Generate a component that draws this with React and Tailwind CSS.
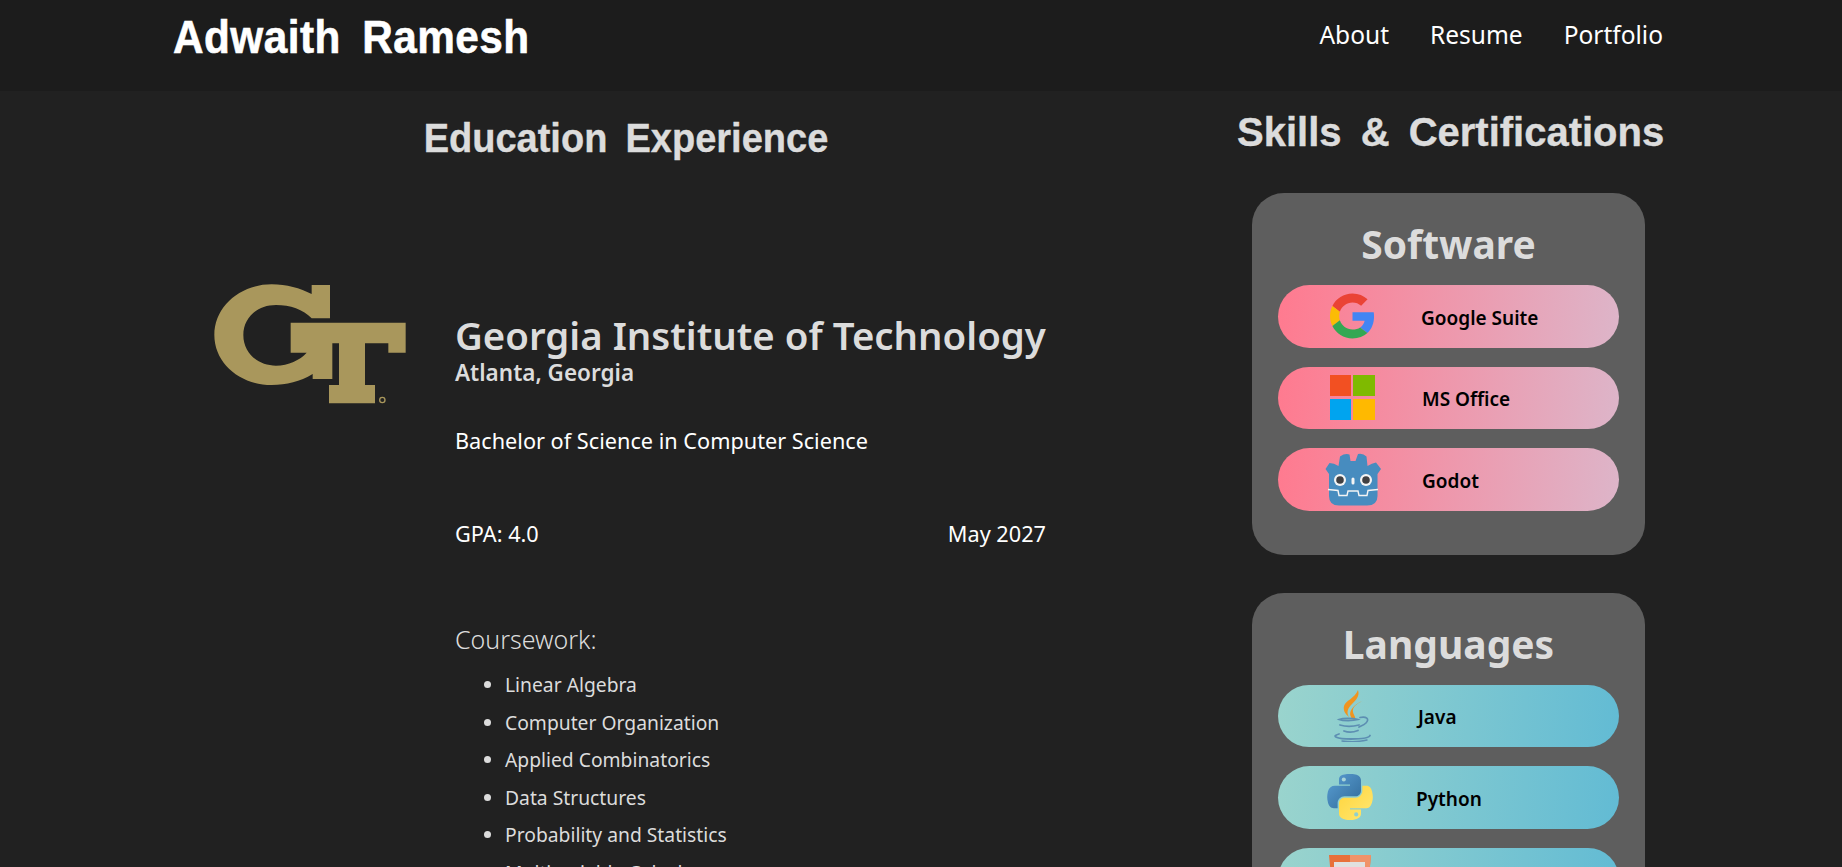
import React from 'react';

const body = "font-['Noto_Sans',sans-serif]";
const display = "font-['Liberation_Sans',sans-serif] font-bold";

const GoogleIcon = () => (
  <svg viewBox="0 0 48 48" className="w-[45px] h-[46px]">
    <path fill="#EA4335" d="M24 9.5c3.54 0 6.71 1.22 9.21 3.6l6.85-6.85C35.9 2.38 30.47 0 24 0 14.62 0 6.51 5.38 2.56 13.22l7.98 6.19C12.43 13.72 17.74 9.5 24 9.5z" />
    <path fill="#4285F4" d="M46.98 24.55c0-1.57-.15-3.09-.38-4.55H24v9.02h12.94c-.58 2.96-2.26 5.48-4.78 7.18l7.73 6c4.51-4.18 7.09-10.36 7.09-17.65z" />
    <path fill="#FBBC05" d="M10.53 28.59c-.48-1.45-.76-2.99-.76-4.59s.27-3.14.76-4.59l-7.98-6.19C.92 16.46 0 20.12 0 24c0 3.88.92 7.54 2.56 10.78l7.97-6.19z" />
    <path fill="#34A853" d="M24 48c6.48 0 11.93-2.13 15.89-5.81l-7.73-6c-2.15 1.45-4.92 2.3-8.16 2.3-6.26 0-11.57-4.22-13.47-9.91l-7.98 6.19C6.51 42.62 14.62 48 24 48z" />
  </svg>
);

const OfficeIcon = () => (
  <svg viewBox="0 0 45 45" className="w-[45px] h-[45px]">
    <rect x="0" y="0" width="21" height="21" fill="#f25022" />
    <rect x="23" y="0" width="22" height="21" fill="#7fba00" />
    <rect x="0" y="24" width="21" height="21" fill="#00a4ef" />
    <rect x="23" y="24" width="22" height="21" fill="#ffb900" />
  </svg>
);

const GodotIcon = () => (
  <svg viewBox="0 0 56 53" className="w-[56px] h-[53px]">
    <path fill="#478cbf" d="M0.5 16 L4.5 10 Q9 10 13.5 13 L15 3.5 Q20 0 24.5 1.5 L25.5 8 H30.5 L33 1 Q38 0 41.5 3.5 L42.5 13 Q47 10 51 9.5 L56 16 L52.5 21 V43 Q52.5 52.5 42 52.5 H14 Q4 52.5 4 43 V21 Z" />
    <circle cx="15" cy="27" r="6" fill="#f4f4f4" />
    <circle cx="15" cy="27" r="3.8" fill="#414042" />
    <circle cx="41" cy="27" r="6" fill="#f4f4f4" />
    <circle cx="41" cy="27" r="3.8" fill="#414042" />
    <rect x="26.5" y="24.5" width="3" height="7" rx="1.5" fill="#f4f4f4" />
    <path fill="none" stroke="#f4f4f4" strokeWidth="1.4" d="M3 36.5 L13 37.5 L14 42.5 H22 L23 38 H33 L34 42.5 H42 L43 37.5 L53 36.5" />
  </svg>
);

const JavaIcon = () => (
  <svg viewBox="0 0 38 52" className="w-[38px] h-[52px]">
    <path fill="#f0941f" d="M25 0 C27 6 23 10 19 14 C15 18 13 22 16 27 C12 24 10 20 11 16 C12 11 22 8 25 0 Z" />
    <path fill="#f0941f" d="M29 11 C24 14 19 17 20 22 C20.500 25 23 27 22 29 C21 32 19 29 18 27 C15 22 20 15 29 11 Z" />
    <g fill="none" stroke="#5d8fb2" strokeLinecap="round">
      <path strokeWidth="1.600" d="M6 29.500 C10 28 20 28 25 29.500 C20 31 10 31 6 29.500 Z" />
      <path strokeWidth="1.700" d="M27 27.500 C33 26 37 29 33 33 C31 35 28 36 26 37" />
      <path strokeWidth="1.800" d="M7 35 C12 36.500 20 36.500 26 35" />
      <path strokeWidth="1.800" d="M11 41 C15 42.500 20 42.500 25 40.500" />
      <path strokeWidth="1.800" d="M6 44 C-2 46 3 49 18 49 C28 49 36 48 37 45.500" />
      <path strokeWidth="1.400" d="M9 51 C17 52 28 51.500 34 50" />
    </g>
  </svg>
);

const PythonIcon = () => (
  <svg viewBox="0 0 111 112" className="w-[46px] h-[46px]">
    <defs>
      <linearGradient id="pyBlue" x1="0" y1="0" x2="1" y2="1">
        <stop offset="0" stopColor="#5a9fd4" />
        <stop offset="1" stopColor="#306998" />
      </linearGradient>
      <linearGradient id="pyYellow" x1="0" y1="0" x2="1" y2="1">
        <stop offset="0" stopColor="#ffd43b" />
        <stop offset="1" stopColor="#ffe873" />
      </linearGradient>
    </defs>
    <path fill="url(#pyBlue)" d="M54.9 0 C50.3 0 46 .4 42.1 1.100 C30.800 3.100 28.700 7.300 28.700 15 V25.300 H55.500 V28.700 H18.600 C10.800 28.700 4 33.300 1.900 42.300 C-.6 52.500 -.7 58.800 1.900 69.500 C3.800 77.400 8.300 83.100 16.100 83.100 H25.400 V70.800 C25.400 62 33 54.200 42.100 54.200 H68.900 C76.300 54.200 82.300 48 82.300 40.600 V15 C82.300 7.800 76.200 2.300 68.900 1.100 C64.300 .3 59.500 0 54.900 0 Z" />
    <path fill="url(#pyYellow)" d="M85.600 28.700 V40.600 C85.600 49.800 77.800 57.600 68.900 57.600 H42.100 C34.800 57.600 28.700 63.800 28.700 71.200 V96.800 C28.700 104 35 108.300 42.100 110.400 C50.600 112.900 58.700 113.300 68.900 110.400 C75.600 108.400 82.300 104.500 82.300 96.800 V86.500 H55.500 V83.100 H95.700 C103.500 83.100 106.400 77.700 109.100 69.500 C111.900 61.100 111.800 53 109.100 42.300 C107.200 34.500 103.500 28.700 95.700 28.700 Z" />
    <circle cx="40.400" cy="13.300" r="5" fill="#a8d4d8" />
    <circle cx="70.600" cy="98.400" r="5" fill="#8fcfd0" />
  </svg>
);

const HtmlIcon = () => (
  <svg viewBox="0 0 42 48" className="w-[42px] h-[48px]">
    <path fill="#e8703a" d="M0 0 H42 L38 43 L21 48 L4 43 Z" />
    <path fill="#f0936a" d="M21 0 H42 L38 43 L21 48 Z" />
    <rect x="5" y="7" width="31" height="30" fill="#e0e0e0" />
  </svg>
);

const GtLogo = () => (
  <svg viewBox="0 0 660 450" className="w-[220px] h-[150px]">
    <path fill="#a9975c" d="M335 45 H390 V145 H335 C310 118 270 105 228 105 C170 105 130 145 130 195 C130 250 175 287 228 287 C265 287 300 270 320 248 H272 V158 H617 V248 H565 V220 H495 V345 H525 V400 H387 V345 H417 V220 H397 V327 H338 V312 C300 335 260 345 215 345 C120 345 43 280 43 195 C43 110 120 43 215 43 C260 43 300 55 335 72 Z" />
    <circle cx="547" cy="390" r="8" fill="none" stroke="#a9975c" strokeWidth="4" />
  </svg>
);

const software = [
  { name: 'Google Suite', Icon: GoogleIcon, iconBox: 'ml-[46px] w-[56px]', textBox: 'ml-[41px]' },
  { name: 'MS Office', Icon: OfficeIcon, iconBox: 'ml-[46px] w-[56px]', textBox: 'ml-[42px]' },
  { name: 'Godot', Icon: GodotIcon, iconBox: 'ml-[47px] w-[56px]', textBox: 'ml-[41px]' },
];

const languages = [
  { name: 'Java', Icon: JavaIcon, iconBox: 'ml-[55px] w-[38px]', textBox: 'ml-[47px]' },
  { name: 'Python', Icon: PythonIcon, iconBox: 'ml-[49px] w-[46px]', textBox: 'ml-[43px]' },
  { name: 'HTML', Icon: HtmlIcon, iconBox: 'ml-[51px] w-[42px]', textBox: 'ml-[50px]' },
];

const coursework = [
  'Linear Algebra',
  'Computer Organization',
  'Applied Combinatorics',
  'Data Structures',
  'Probability and Statistics',
  'Multivariable Calculus',
];

const SkillCard = ({ title, items, pillClass }) => (
  <div className="rounded-[32px] bg-[#5e5e5e] px-[26px] pt-[25px] pb-[44px]">
    <h3 className={`${body} text-center text-[39px] leading-[52px] font-bold text-[#dcdcdc]`}>{title}</h3>
    <div className="mt-[15px] flex flex-col gap-[19px]">
      {items.map(({ name, Icon, iconBox, textBox }) => (
        <div key={name} className={`flex h-[62.500px] items-center rounded-full ${pillClass}`}>
          <div className={`flex shrink-0 justify-center ${iconBox}`}>
            <Icon />
          </div>
          <span className={`${body} ${textBox} mt-[3px] text-[19px] font-semibold text-black`}>{name}</span>
        </div>
      ))}
    </div>
  </div>
);

export default function App() {
  return (
    <div className="h-screen overflow-hidden bg-[#212121]">
      <header className="flex h-[91px] items-start justify-between bg-[#1c1c1c] pl-[173px] pr-[179px]">
        <h1 className={`${display} mt-[8px] origin-left scale-x-[0.92] text-[46px] leading-[58px] tracking-[0.5px] text-white [-webkit-text-stroke:0.6px_#fff] [word-spacing:10px]`}>Adwaith Ramesh</h1>
        <nav className={`${body} mt-[17px] flex gap-[41px] text-[24.500px] leading-[36px] text-white`}>
          <a>About</a>
          <a>Resume</a>
          <a>Portfolio</a>
        </nav>
      </header>

      <main className="flex justify-between pl-[173px] pr-[179px]">
        <section className="w-[906px]">
          <h2 className={`${display} mt-[21px] scale-x-[0.95] text-center text-[40px] leading-[52px] text-[#dcdcdc] [-webkit-text-stroke:0.4px_#dcdcdc] [word-spacing:8px]`}>Education Experience</h2>

          <div className="mt-[92px] flex items-start">
            <div className="mt-[14px] ml-[27px] shrink-0 w-[255px]">
              <GtLogo />
            </div>
            <div className={`${body} mt-[57px] w-[591px] text-white`}>
              <h3 className="text-[38.400px] leading-[44px] font-semibold text-[#dcdcdc]">Georgia Institute of Technology</h3>
              <p className="mt-[3px] text-[22.500px] leading-[26px] font-semibold text-[#dcdcdc]">Atlanta, Georgia</p>
              <p className="mt-[41px] text-[21.700px] leading-[28px]">Bachelor of Science in Computer Science</p>
              <div className="mt-[65px] flex justify-between text-[21.700px] leading-[28px]">
                <span>GPA: 4.0</span>
                <span>May 2027</span>
              </div>
              <p className="mt-[75px] text-[25px] leading-[32px] font-light text-[#dcdcdc]">Coursework:</p>
              <ul className="mt-[11px] list-disc pl-[50px] text-[19.300px] leading-[37.500px] text-[#dcdcdc]">
                {coursework.map((c) => (
                  <li key={c}>{c}</li>
                ))}
              </ul>
            </div>
          </div>
        </section>

        <aside className="w-[426px] shrink-0">
          <h2 className={`${display} mt-[15px] whitespace-nowrap text-right text-[40px] leading-[52px] text-[#dcdcdc] [-webkit-text-stroke:0.4px_#dcdcdc] [word-spacing:8px]`}>Skills &amp; Certifications</h2>
          <div className="mt-[35px] ml-[15px] flex w-[393px] flex-col gap-[38px]">
            <SkillCard title="Software" items={software} pillClass="bg-[linear-gradient(95deg,#ff7a8f,#ddb5c9)]" />
            <SkillCard title="Languages" items={languages} pillClass="bg-[linear-gradient(95deg,#9ad4cd,#62bbd4)]" />
          </div>
        </aside>
      </main>
    </div>
  );
}
